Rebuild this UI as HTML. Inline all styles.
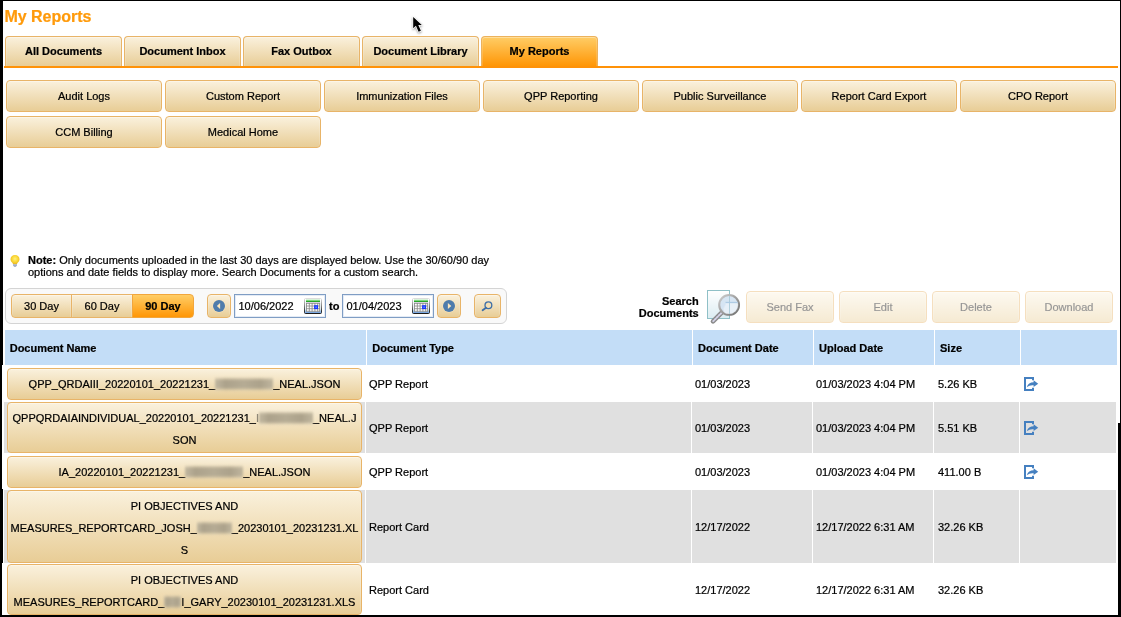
<!DOCTYPE html>
<html>
<head>
<meta charset="utf-8">
<title>My Reports</title>
<style>
*{box-sizing:border-box;margin:0;padding:0}
html,body{width:1121px;height:617px;overflow:hidden;background:#fff}
body{position:relative;font-family:"Liberation Sans",sans-serif;font-size:11px;color:#000;-webkit-text-stroke:.22px}
#w{position:absolute;left:0;top:0;width:1121px;height:617px;will-change:transform}
.abs{position:absolute}
.blk{position:absolute;background:#000}
.title{position:absolute;left:4.4px;top:7px;font-size:16px;line-height:20px;font-weight:bold;color:#ff9a0a;white-space:nowrap}
.tab{position:absolute;top:36px;height:30px;width:117px;border:1px solid #e8b468;border-bottom:none;border-radius:4px 4px 0 0;
 background:linear-gradient(#faf1dd,#e8cd96);box-shadow:inset 0 1px 0 rgba(255,255,255,.35),inset 1px 0 0 rgba(255,255,255,.15),inset -1px 0 0 rgba(255,255,255,.15);text-align:center;font-weight:bold;font-size:11px;line-height:28px;white-space:nowrap}
.tab.on{background:linear-gradient(#ffcd66,#ff9606);border-color:#ecb25c}
.oline{position:absolute;left:4px;top:66px;width:1114px;height:2px;background:#ff9208}
.btn{position:absolute;border:1px solid #e8b468;border-radius:4px;background:linear-gradient(#faf1dd,#e8cd96);box-shadow:inset 0 1px 0 rgba(255,255,255,.35),inset 1px 0 0 rgba(255,255,255,.15),inset -1px 0 0 rgba(255,255,255,.15);
 text-align:center;font-size:11px;white-space:nowrap}
.sub{width:156px;height:32px;line-height:30px}
.note{position:absolute;left:28px;top:254px;font-size:11px;line-height:12px;white-space:nowrap}
.tbar{position:absolute;left:5px;top:288px;width:502px;height:36px;border:1px solid #d4d4d4;border-radius:6px;background:#f9f9f9}
.day{height:24px;top:294px;line-height:22px}
.day.on{box-shadow:none;border-left-color:#ffb238;background:linear-gradient(#ffcd66,#ff9606);font-weight:bold;border-color:#f2a63c}
.inp{position:absolute;top:294px;width:92px;height:24px;border:1px solid #7f9dc4;background:#fff;font-size:11px;line-height:22px;padding-left:3.5px;box-shadow:inset 0 0 0 1px #e4ebf5}
.dis{opacity:.42;width:88px;height:32px;top:291px;line-height:30px}
.th{position:absolute;top:330px;height:35px;background:#c3ddf7;font-weight:bold;font-size:11px;line-height:37px;padding-left:5px;white-space:nowrap;overflow:hidden}
.gr{position:absolute;background:#e0e0e0}
.td{position:absolute;font-size:11px;line-height:14px;white-space:nowrap}
.rb{left:7px;width:355px;line-height:22px;padding-top:4px}
.red{display:inline-block;position:relative;height:14px;vertical-align:-3px;filter:blur(.8px);background:linear-gradient(180deg,rgba(174,164,141,0) 0,rgba(174,164,141,.6) 13%,rgba(172,162,139,1) 27%,rgba(172,162,139,1) 73%,rgba(174,164,141,.6) 87%,rgba(174,164,141,0) 100%)}
.red:after{content:"";position:absolute;left:0;top:0;right:0;bottom:0;background:linear-gradient(90deg,rgba(250,240,215,.28),rgba(250,240,215,0) 18%,rgba(250,240,215,.12) 50%,rgba(250,240,215,0) 78%,rgba(250,240,215,.25))}
</style>
</head>
<body>
<div id="w">
<!-- frame -->
<div class="blk" style="left:0;top:0;width:3px;height:617px"></div>
<div class="abs" style="left:2px;top:365px;width:1px;height:124px;background:#fff"></div>
<div class="abs" style="left:2px;top:563px;width:1px;height:52px;background:#fff"></div>
<div class="blk" style="left:0;top:0;width:1121px;height:1px"></div>
<div class="blk" style="left:1120px;top:0;width:1px;height:617px"></div>
<div class="blk" style="left:1118px;top:423px;width:3px;height:194px"></div>
<div class="blk" style="left:0;top:615px;width:1121px;height:2px"></div>

<div class="title">My Reports</div>

<!-- tabs -->
<div class="tab" style="left:5px">All Documents</div>
<div class="tab" style="left:124px">Document Inbox</div>
<div class="tab" style="left:243px">Fax Outbox</div>
<div class="tab" style="left:362px">Document Library</div>
<div class="tab on" style="left:481px">My Reports</div>
<div class="oline"></div>

<!-- sub buttons -->
<div class="btn sub" style="left:6px;top:80px">Audit Logs</div>
<div class="btn sub" style="left:165px;top:80px">Custom Report</div>
<div class="btn sub" style="left:324px;top:80px">Immunization Files</div>
<div class="btn sub" style="left:483px;top:80px">QPP Reporting</div>
<div class="btn sub" style="left:642px;top:80px">Public Surveillance</div>
<div class="btn sub" style="left:801px;top:80px">Report Card Export</div>
<div class="btn sub" style="left:960px;top:80px">CPO Report</div>
<div class="btn sub" style="left:6px;top:116px">CCM Billing</div>
<div class="btn sub" style="left:165px;top:116px">Medical Home</div>

<!-- note -->
<svg class="abs" style="left:9px;top:254px" width="12" height="14" viewBox="0 0 12 14">
 <defs><radialGradient id="bg" cx="50%" cy="42%" r="58%"><stop offset="0" stop-color="#fff07a"/><stop offset=".55" stop-color="#fbd838"/><stop offset="1" stop-color="#e8b71c"/></radialGradient></defs>
 <path d="M6 1C3.300 1 1.500 2.900 1.500 5.200c0 1.500.9 2.500 1.600 3.400.5.600.8 1.100.9 1.600h4c.1-.5.400-1 .9-1.600.7-.9 1.600-1.900 1.600-3.400C10.500 2.900 8.700 1 6 1z" fill="url(#bg)"/>
 <path d="M4 10.200H8V11.400L7.300 12.200 6.600 12.800H5.400L4.700 12.200 4 11.400z" fill="#8f9bb8"/>
 <path d="M4 11H8" stroke="#e0e4f0" stroke-width=".5"/>
</svg>
<div class="note"><b>Note:</b> Only documents uploaded in the last 30 days are displayed below. Use the 30/60/90 day<br>options and date fields to display more. Search Documents for a custom search.</div>

<!-- toolbar -->
<div class="tbar"></div>
<div class="btn day" style="left:11px;width:61px;border-radius:4px 0 0 4px">30 Day</div>
<div class="btn day" style="left:71px;width:62px;border-radius:0">60 Day</div>
<div class="btn day on" style="left:132px;width:62px;border-radius:0 4px 4px 0">90 Day</div>

<div class="btn" style="left:207px;top:294px;width:24px;height:24px"></div>
<svg class="abs" style="left:212px;top:299px" width="14" height="14" viewBox="0 0 14 14"><circle cx="7" cy="7" r="6.500" fill="#fde7bd"/><circle cx="7" cy="7" r="6" fill="#4f7cac"/><path d="M4.900 7L8.100 3.900V10.100z" fill="#fde7bd"/></svg>
<div class="inp" style="left:234px">10/06/2022</div>
<div class="abs" style="left:329px;top:294px;line-height:24px;font-weight:bold;font-size:11px">to</div>
<div class="inp" style="left:342px">01/04/2023</div>
<div class="btn" style="left:437px;top:294px;width:24px;height:24px"></div>
<svg class="abs" style="left:442px;top:299px" width="14" height="14" viewBox="0 0 14 14"><circle cx="7" cy="7" r="6.500" fill="#fde7bd"/><circle cx="7" cy="7" r="6" fill="#4f7cac"/><path d="M9.300 7L5.900 3.900V10.100z" fill="#fde7bd"/></svg>
<div class="btn" style="left:474px;top:294px;width:27px;height:24px"></div>
<svg class="abs" style="left:480px;top:299px" width="16" height="14" viewBox="0 0 16 14"><circle cx="8.400" cy="6.300" r="3.400" fill="#f4dfb4" stroke="#3d6ea8" stroke-width="1.300"/><path d="M6 8.700L2.600 11.300" stroke="#3d6ea8" stroke-width="1.800" stroke-linecap="round"/></svg>

<!-- calendar icons -->
<svg class="abs" style="left:304px;top:298px" width="18" height="16" viewBox="0 0 18 16">
 <defs><linearGradient id="cg" x1="0" y1="0" x2="0" y2="1"><stop offset="0" stop-color="#dcdcdc"/><stop offset=".45" stop-color="#8a8a8a"/><stop offset=".8" stop-color="#3a3a3a"/><stop offset="1" stop-color="#1c1c1c"/></linearGradient>
 <linearGradient id="cf" x1="0" y1="0" x2="0" y2="1"><stop offset="0" stop-color="#fff"/><stop offset=".7" stop-color="#e6f3f7"/><stop offset=".86" stop-color="#9cc4ec"/><stop offset="1" stop-color="#5b8ed8"/></linearGradient></defs>
 <rect x=".5" y=".5" width="17" height="15" rx="1" fill="url(#cf)" stroke="url(#cg)"/>
 <rect x="2" y="1.700" width="14" height="1.100" fill="#7ddc7d"/><rect x="2" y="2.800" width="14" height="1.200" fill="#27a527"/>
 <rect x="2" y="4.200" width="14" height=".7" fill="#d9cbe2"/>
 <rect x="2" y="5" width="14" height="8.600" fill="#fff"/>
 <path d="M2 5.400H16M2 8H16M2 10.700H16M2 13.300H16" stroke="#868686" stroke-width=".8"/>
 <path d="M2.500 5V13.600M5.300 5V13.600M8.100 5V13.600M10.900 5V13.600M13.700 5V13.600M15.600 5V13.600" stroke="#868686" stroke-width=".85"/>
 <rect x="10.100" y="7.200" width="3.900" height="3.900" fill="#1735ff"/>
 <rect x="11.500" y="8.600" width="1.200" height="1.100" fill="#8fd0ff"/>
</svg>
<svg class="abs" style="left:412px;top:298px" width="18" height="16" viewBox="0 0 18 16">
 <rect x=".5" y=".5" width="17" height="15" rx="1" fill="url(#cf)" stroke="url(#cg)"/>
 <rect x="2" y="1.700" width="14" height="1.100" fill="#7ddc7d"/><rect x="2" y="2.800" width="14" height="1.200" fill="#27a527"/>
 <rect x="2" y="4.200" width="14" height=".7" fill="#d9cbe2"/>
 <rect x="2" y="5" width="14" height="8.600" fill="#fff"/>
 <path d="M2 5.400H16M2 8H16M2 10.700H16M2 13.300H16" stroke="#868686" stroke-width=".8"/>
 <path d="M2.500 5V13.600M5.300 5V13.600M8.100 5V13.600M10.900 5V13.600M13.700 5V13.600M15.600 5V13.600" stroke="#868686" stroke-width=".85"/>
 <rect x="10.100" y="7.200" width="3.900" height="3.900" fill="#1735ff"/>
 <rect x="11.500" y="8.600" width="1.200" height="1.100" fill="#8fd0ff"/>
</svg>

<!-- search documents -->
<div class="abs" style="left:600.700px;top:295px;width:98px;text-align:right;font-weight:bold;font-size:11px;line-height:12px">Search<br>Documents</div>
<svg class="abs" style="left:705px;top:288px" width="38" height="38" viewBox="0 0 38 38">
 <defs><linearGradient id="dg" x1="0" y1="0" x2="0" y2="1"><stop offset="0" stop-color="#fff"/><stop offset="1" stop-color="#dcedf2"/></linearGradient>
 <linearGradient id="rg" x1="0" y1="0" x2="1" y2="1"><stop offset="0" stop-color="#cfcfcf"/><stop offset="1" stop-color="#6e6e6e"/></linearGradient>
 <clipPath id="lc"><circle cx="24.100" cy="16.900" r="9.200"/></clipPath></defs>
 <rect x="2.500" y="2.500" width="22" height="28" fill="url(#dg)" stroke="#8fc0c7"/>
 <path d="M17.200 24.200L8 33.400" stroke="#8a8a8a" stroke-width="4.600" stroke-linecap="round"/>
 <path d="M16.600 24.800L8.200 33.200" stroke="#d2d2e6" stroke-width="1.900" stroke-linecap="round" stroke-dasharray="1.300 1.500"/>
 <circle cx="24.100" cy="16.900" r="9.900" fill="#d3e2f2" fill-opacity=".9" stroke="url(#rg)" stroke-width="2.100"/>
 <g clip-path="url(#lc)">
  <path d="M20.500 14.500H36V30H18.500V19.500H19.500V17.500H20.500z" fill="#fff" fill-opacity=".42"/>
  <path d="M24.500 6V28" stroke="#a8cbd8" stroke-width="1" opacity=".85"/>
  <path d="M20.500 14.500H34" stroke="#a9c8e4" stroke-width="1.300" opacity=".9"/>
 </g>
</svg>
<div class="btn dis" style="left:746px">Send Fax</div>
<div class="btn dis" style="left:839px">Edit</div>
<div class="btn dis" style="left:932px">Delete</div>
<div class="btn dis" style="left:1025px">Download</div>

<!-- table header -->
<div class="th" style="left:5px;width:361px;padding-left:4.700px">Document Name</div>
<div class="th" style="left:367px;width:325px;padding-left:5.300px">Document Type</div>
<div class="th" style="left:693px;width:120px">Document Date</div>
<div class="th" style="left:814px;width:120px">Upload Date</div>
<div class="th" style="left:935px;width:85px">Size</div>
<div class="th" style="left:1021px;width:96px"></div>

<!-- gray rows -->
<div class="gr" style="left:4px;top:402px;width:361px;height:51px"></div>
<div class="gr" style="left:366px;top:402px;width:325px;height:51px"></div>
<div class="gr" style="left:692px;top:402px;width:120px;height:51px"></div>
<div class="gr" style="left:813px;top:402px;width:120px;height:51px"></div>
<div class="gr" style="left:934px;top:402px;width:85px;height:51px"></div>
<div class="gr" style="left:1020px;top:402px;width:96px;height:51px"></div>
<div class="gr" style="left:4px;top:490px;width:361px;height:73px"></div>
<div class="gr" style="left:366px;top:490px;width:325px;height:73px"></div>
<div class="gr" style="left:692px;top:490px;width:120px;height:73px"></div>
<div class="gr" style="left:813px;top:490px;width:120px;height:73px"></div>
<div class="gr" style="left:934px;top:490px;width:85px;height:73px"></div>
<div class="gr" style="left:1020px;top:490px;width:96px;height:73px"></div>

<!-- row buttons -->
<div class="btn rb" style="top:368px;height:32px">QPP_QRDAIII_20220101_20221231_<span class="red" style="width:58px"></span>_NEAL.JSON</div>
<div class="btn rb" style="top:402px;height:51px">QPPQRDAIAINDIVIDUAL_20220101_20221231_<span style="color:#8a8474">I</span><span class="red" style="width:54px"></span>_NEAL.J<br>SON</div>
<div class="btn rb" style="top:456px;height:32px">IA_20220101_20221231_<span class="red" style="width:58px"></span>_NEAL.JSON</div>
<div class="btn rb" style="top:490px;height:73px">PI OBJECTIVES AND<br>MEASURES_REPORTCARD_JOSH_<span class="red" style="width:35px"></span>_20230101_20231231.XL<br>S</div>
<div class="btn rb" style="top:564px;height:51px">PI OBJECTIVES AND<br>MEASURES_REPORTCARD_<span class="red" style="width:17px"></span>I_GARY_20230101_20231231.XLS</div>

<!-- cells -->
<div class="td" style="left:369px;top:377px">QPP Report</div>
<div class="td" style="left:695px;top:377px">01/03/2023</div>
<div class="td" style="left:816px;top:377px">01/03/2023 4:04 PM</div>
<div class="td" style="left:938px;top:377px">5.26 KB</div>

<div class="td" style="left:369px;top:421px">QPP Report</div>
<div class="td" style="left:695px;top:421px">01/03/2023</div>
<div class="td" style="left:816px;top:421px">01/03/2023 4:04 PM</div>
<div class="td" style="left:938px;top:421px">5.51 KB</div>

<div class="td" style="left:369px;top:465px">QPP Report</div>
<div class="td" style="left:695px;top:465px">01/03/2023</div>
<div class="td" style="left:816px;top:465px">01/03/2023 4:04 PM</div>
<div class="td" style="left:938px;top:465px">411.00 B</div>

<div class="td" style="left:369px;top:520px">Report Card</div>
<div class="td" style="left:695px;top:520px">12/17/2022</div>
<div class="td" style="left:816px;top:520px">12/17/2022 6:31 AM</div>
<div class="td" style="left:938px;top:520px">32.26 KB</div>

<div class="td" style="left:369px;top:583px">Report Card</div>
<div class="td" style="left:695px;top:583px">12/17/2022</div>
<div class="td" style="left:816px;top:583px">12/17/2022 6:31 AM</div>
<div class="td" style="left:938px;top:583px">32.26 KB</div>

<!-- export icons -->
<svg class="abs" style="left:1023px;top:376px" width="16" height="16" viewBox="0 0 16 16"><path d="M10 4.200V2H2V14H10V11.800" fill="none" stroke="#4580c0" stroke-width="2"/><path d="M3.800 11.300C4.600 7.900 7.300 6.200 10.600 6.200V4.300L15.200 7.700 10.600 11.100V9.200C8 8.900 5.700 9.500 3.800 11.300z" fill="#4580c0"/></svg>
<svg class="abs" style="left:1023px;top:420px" width="16" height="16" viewBox="0 0 16 16"><path d="M10 4.200V2H2V14H10V11.800" fill="none" stroke="#4580c0" stroke-width="2"/><path d="M3.800 11.300C4.600 7.900 7.300 6.200 10.600 6.200V4.300L15.200 7.700 10.600 11.100V9.200C8 8.900 5.700 9.500 3.800 11.300z" fill="#4580c0"/></svg>
<svg class="abs" style="left:1023px;top:464px" width="16" height="16" viewBox="0 0 16 16"><path d="M10 4.200V2H2V14H10V11.800" fill="none" stroke="#4580c0" stroke-width="2"/><path d="M3.800 11.300C4.600 7.900 7.300 6.200 10.600 6.200V4.300L15.200 7.700 10.600 11.100V9.200C8 8.900 5.700 9.500 3.800 11.300z" fill="#4580c0"/></svg>

<!-- mouse cursor -->
<svg class="abs" style="left:408px;top:13px" width="20" height="24" viewBox="0 0 20 24"><path d="M5.200 4.100V15.200L7.900 12.700 10.600 18.800 12.900 17.800 10.300 11.900H13.800z" fill="#000" stroke="#fff" stroke-width="1.400" stroke-linejoin="round" paint-order="stroke" style="filter:drop-shadow(0 1px 1px rgba(0,0,0,.4))"/></svg>
</div>
</body>
</html>
